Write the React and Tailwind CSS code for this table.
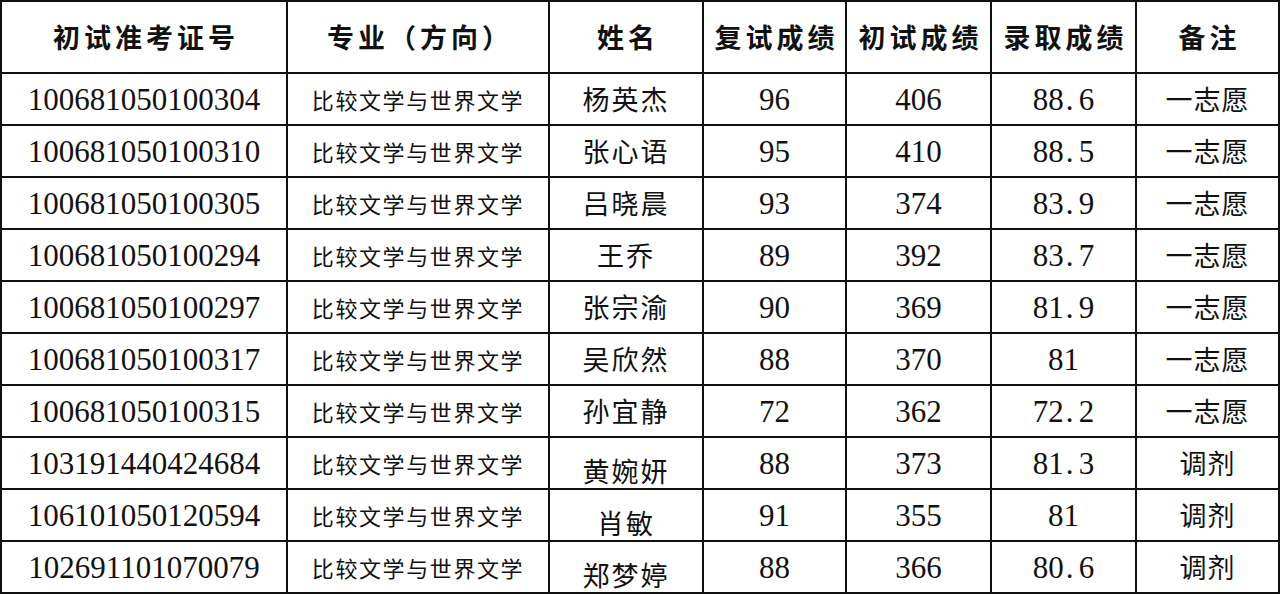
const headers = ['初试准考证号', '专业（方向）', '姓名', '复试成绩', '初试成绩', '录取成绩', '备注']

const rows = [
  ['100681050100304', '杨英杰', '96', '406', '88.6', '一志愿'],
  ['100681050100310', '张心语', '95', '410', '88.5', '一志愿'],
  ['100681050100305', '吕晓晨', '93', '374', '83.9', '一志愿'],
  ['100681050100294', '王乔', '89', '392', '83.7', '一志愿'],
  ['100681050100297', '张宗渝', '90', '369', '81.9', '一志愿'],
  ['100681050100317', '吴欣然', '88', '370', '81', '一志愿'],
  ['100681050100315', '孙宜静', '72', '362', '72.2', '一志愿'],
  ['103191440424684', '黄婉妍', '88', '373', '81.3', '调剂'],
  ['106101050120594', '肖敏', '91', '355', '81', '调剂'],
  ['102691101070079', '郑梦婷', '88', '366', '80.6', '调剂'],
]

const serif = "font-['Liberation_Serif',serif]"
const cjk = "font-['Noto_Sans_CJK_SC',sans-serif]"
const cell = 'flex items-center justify-center border-r-2 border-b-2 border-[#111] text-[#111] whitespace-nowrap'

// SimSun-style digits: the dot gets a half-width cell like the numbers
function Num({ value }) {
  const [a, b] = value.split('.')
  return (
    <span className={`${serif} text-[31px] leading-none`}>
      {a}
      {b !== undefined && (
        <>
          <span className="inline-block w-[15px] text-left pl-[2px]">.</span>
          {b}
        </>
      )}
    </span>
  )
}

export default function App() {
  return (
    <div className="w-[1280px] h-[594px] bg-white overflow-hidden">
      <div className="grid grid-cols-[286px_262px_154px_143px_145px_145px_143px] grid-rows-[72px_repeat(10,52px)] border-l-2 border-t-2 border-[#111]">
        {headers.map(h => (
          <div key={h} className={`${cell} ${cjk} font-bold text-[27px] tracking-[4px] pl-[4px]`}>
            {h}
          </div>
        ))}

        {rows.map((r, i) => (
          <div key={r[0]} className="contents">
            <div className={cell}>
              <Num value={r[0]} />
            </div>
            <div className={`${cell} ${cjk} text-[22px] tracking-[1.6px] font-normal`}>
              比较文学与世界文学
            </div>
            <div className={`${cell} ${cjk} text-[27px] tracking-[2px]`}>
              <span className={i >= 7 ? 'mt-[16px]' : ''}>{r[1]}</span>
            </div>
            <div className={cell}>
              <Num value={r[2]} />
            </div>
            <div className={cell}>
              <Num value={r[3]} />
            </div>
            <div className={cell}>
              <Num value={r[4]} />
            </div>
            <div className={`${cell} ${cjk} text-[27px] tracking-[1px]`}>
              {r[5]}
            </div>
          </div>
        ))}
      </div>
    </div>
  )
}
